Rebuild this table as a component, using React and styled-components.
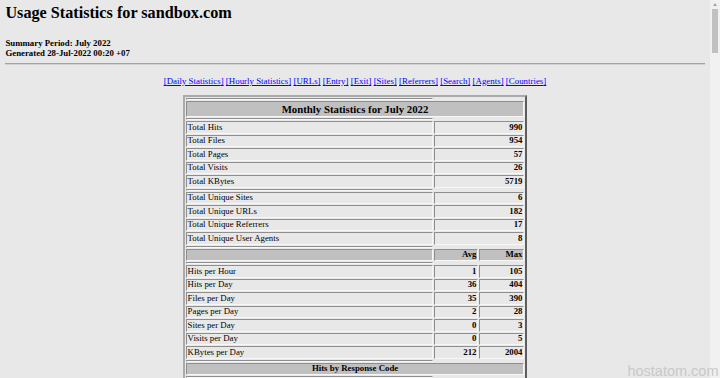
import { Fragment } from 'react';
import styled, { createGlobalStyle } from 'styled-components';

const GlobalStyle = createGlobalStyle`
  html, body {
    margin: 0;
    height: 100%;
    overflow: hidden;
    background: #e8e8e8;
  }
  body {
    font-family: "Liberation Serif", "Times New Roman", serif;
    color: #000;
  }
`;

const navLinks = [
  'Daily Statistics',
  'Hourly Statistics',
  'URLs',
  'Entry',
  'Exit',
  'Sites',
  'Referrers',
  'Search',
  'Agents',
  'Countries',
];

const totals = [
  ['Total Hits', 990],
  ['Total Files', 954],
  ['Total Pages', 57],
  ['Total Visits', 26],
  ['Total KBytes', 5719],
];

const uniques = [
  ['Total Unique Sites', 6],
  ['Total Unique URLs', 182],
  ['Total Unique Referrers', 17],
  ['Total Unique User Agents', 8],
];

const averages = [
  ['Hits per Hour', 1, 105],
  ['Hits per Day', 36, 404],
  ['Files per Day', 35, 390],
  ['Pages per Day', 2, 28],
  ['Sites per Day', 0, 3],
  ['Visits per Day', 0, 5],
  ['KBytes per Day', 212, 2004],
];

function SpacerRow() {
  return (
    <tr>
      <Spacer />
    </tr>
  );
}

function SingleRow({ label, value }) {
  return (
    <tr>
      <Cell $label>{label}</Cell>
      <Cell $align="right" $bold colSpan={2}>
        {value}
      </Cell>
    </tr>
  );
}

export default function App() {
  return (
    <Screen>
      <GlobalStyle />
      <Page>
        <Title>Usage Statistics for sandbox.com</Title>
        <Meta>
          Summary Period: July 2022
          <br />
          Generated 28-Jul-2022 00:20 +07
        </Meta>
        <Rule />
        <Nav>
          {navLinks.map((name, i) => (
            <Fragment key={name}>
              {i > 0 && ' '}
              <NavLink href="#">[{name}]</NavLink>
            </Fragment>
          ))}
        </Nav>
        <StatsTable>
          <tbody>
            <SpacerRow />
            <tr>
              <HeadCell colSpan={3} $big>
                Monthly Statistics for July 2022
              </HeadCell>
            </tr>
            <SpacerRow />
            {totals.map(([label, value]) => (
              <SingleRow key={label} label={label} value={value} />
            ))}
            <SpacerRow />
            {uniques.map(([label, value]) => (
              <SingleRow key={label} label={label} value={value} />
            ))}
            <SpacerRow />
            <tr>
              <HeadCell $label>&nbsp;</HeadCell>
              <HeadCell $align="right" $avg>
                Avg
              </HeadCell>
              <HeadCell $align="right">Max</HeadCell>
            </tr>
            <SpacerRow />
            {averages.map(([label, avg, max]) => (
              <tr key={label}>
                <Cell $label>{label}</Cell>
                <Cell $align="right" $bold>
                  {avg}
                </Cell>
                <Cell $align="right" $bold>
                  {max}
                </Cell>
              </tr>
            ))}
            <SpacerRow />
            <tr>
              <HeadCell colSpan={3}>Hits by Response Code</HeadCell>
            </tr>
            <SpacerRow />
          </tbody>
        </StatsTable>
      </Page>
      <Scrollbar>
        <ScrollArrow />
        <ScrollThumb />
      </Scrollbar>
      <Watermark>hostatom.com</Watermark>
    </Screen>
  );
}

const Screen = styled.div`
  position: relative;
  display: flex;
  height: 100vh;
  overflow: hidden;
`;

const Page = styled.main`
  flex: 1;
  min-width: 0;
  padding: 4.4px 5.4px 0;
  box-sizing: border-box;
`;

const Title = styled.h2`
  margin: 0 0 14.6px;
  font-size: 16.2px;
  font-weight: 700;
  line-height: 18.6px;
`;

const Meta = styled.p`
  margin: 0;
  font-size: 8.8px;
  font-weight: 700;
  line-height: 10px;
`;

const Rule = styled.hr`
  margin: 5.8px 0 0;
  height: 0;
  border: 0;
  border-top: 1px solid #a4a4a4;
  border-bottom: 1px solid #d2d2d2;
`;

const Nav = styled.nav`
  margin: 10.5px 0 9.5px;
  text-align: center;
  font-size: 8.9px;
  line-height: 10px;
`;

const NavLink = styled.a`
  color: #0000ff;
  text-decoration: underline;
`;

const StatsTable = styled.table`
  width: 344px;
  margin: 0 auto;
  border-collapse: separate;
  border-spacing: 1px;
  border: 2px solid;
  border-color: #aaaaaa #5e5e5e #5e5e5e #aaaaaa;
`;

const Cell = styled.td`
  box-sizing: border-box;
  width: ${(p) => (p.$label ? '247px' : p.$avg ? '44px' : 'auto')};
  border: 1px solid;
  border-color: #8e8e8e #f7f7f7 #f7f7f7 #8e8e8e;
  padding: 0.5px 0.5px 0.5px 0.6px;
  font-size: 8.8px;
  line-height: 9.5px;
  font-weight: ${(p) => (p.$bold ? 700 : 400)};
  text-align: ${(p) => p.$align || 'left'};
  white-space: nowrap;
`;

const HeadCell = styled(Cell).attrs({ as: 'th' })`
  background: #c0c0c0;
  font-weight: 700;
  font-size: ${(p) => (p.$big ? '10.8px' : '8.8px')};
  line-height: ${(p) => (p.$big ? '13px' : '9.5px')};
  text-align: ${(p) => p.$align || 'center'};
`;

const Spacer = styled.th`
  height: 0;
  padding: 0;
  font-size: 0;
  line-height: 0;
  border: 1px solid;
  border-color: #8e8e8e #f7f7f7 #f7f7f7 #8e8e8e;
`;

const Scrollbar = styled.aside`
  width: 10px;
  flex: none;
  height: 100vh;
  background: #f1f1f1;
  display: flex;
  flex-direction: column;
  align-items: center;
  padding-top: 3px;
  box-sizing: border-box;
`;

const ScrollArrow = styled.div`
  width: 0;
  height: 0;
  border-left: 2.5px solid transparent;
  border-right: 2.5px solid transparent;
  border-bottom: 3px solid #a3a3a3;
`;

const ScrollThumb = styled.div`
  margin-top: 3px;
  width: 6px;
  height: 44px;
  background: #c1c1c1;
`;

const Watermark = styled.div`
  position: absolute;
  right: 1.5px;
  bottom: -1px;
  font-family: "Liberation Sans", Arial, sans-serif;
  font-size: 14.5px;
  line-height: 16px;
  color: #c9c9c9;
  pointer-events: none;
`;
